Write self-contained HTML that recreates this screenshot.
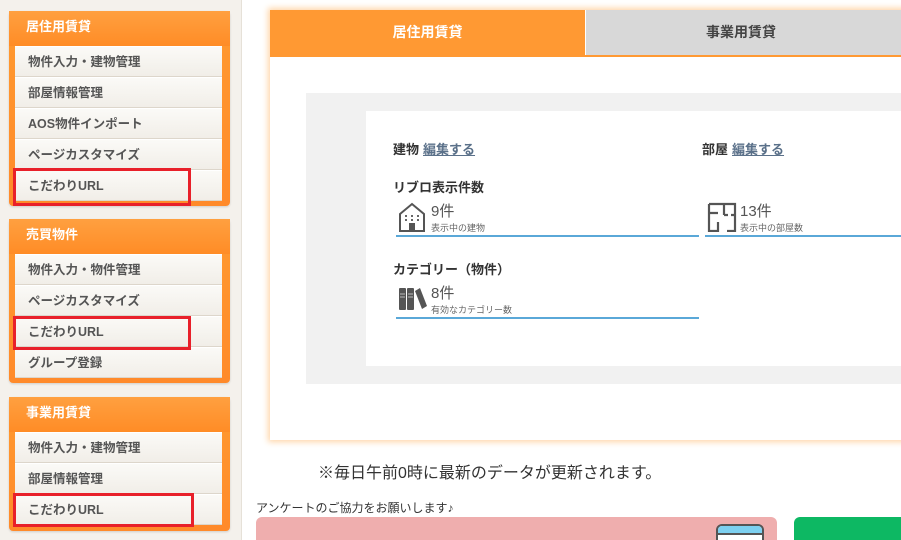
<!DOCTYPE html>
<html><head><meta charset="utf-8"><style>
*{box-sizing:border-box;margin:0;padding:0}
html,body{width:901px;height:540px;overflow:hidden}
body{background:#fff;font-family:"Liberation Sans","Noto Sans CJK JP",sans-serif;position:relative}
.side{position:absolute;left:0;top:0;width:242px;height:540px;background:#f4f1ec;border-right:1px solid #e6e1d8}
.panel{position:absolute;left:9px;width:221px;background:linear-gradient(#ff9a30,#ff8a2a);border-radius:4px;box-shadow:0 1px 2px rgba(0,0,0,.15)}
.panel h3{height:35px;line-height:32px;padding-left:17px;color:#fff;font-size:13px;font-weight:bold;background:linear-gradient(#ffa040,#ff8c26)}
.item{margin:0 8px 0 6px;height:31px;line-height:30px;background:linear-gradient(#fbfaf7,#f1eee8);border-bottom:1px solid #ddd6cb;border-top:1px solid #fff;padding-left:13px;font-size:12.5px;font-weight:bold;color:#555}
.red{position:absolute;border:3px solid #e8202a}
.card{position:absolute;left:270px;top:10px;width:640px;height:430px;background:#fff;box-shadow:0 0 6px 2px #ffd6a8}
.tab1{position:absolute;left:0;top:0;width:315px;height:46px;background:#ff9933;color:#fff;font-weight:bold;font-size:14px;text-align:center;line-height:44px}
.tab2{position:absolute;left:316px;top:0;width:324px;height:45px;background:#d8d8d8;color:#444;font-weight:bold;font-size:14px;line-height:44px;padding-left:120px}
.tline{position:absolute;left:0;top:45px;width:640px;height:2px;background:#ff9933}
.gray{position:absolute;left:36px;top:83px;width:604px;height:291px;background:#f1f1f1}
.inner{position:absolute;left:60px;top:18px;width:544px;height:255px;background:#fff}
.t{position:absolute;font-size:13px;font-weight:bold;color:#333;white-space:nowrap}
.t a{color:#5a7089;text-decoration:underline;margin-left:4px}
.stat{position:absolute;height:30px;border-bottom:2px solid #5aa8d8}
.num{position:absolute;left:35px;top:-7px;font-size:15px;color:#555}
.sub{position:absolute;left:35px;top:14px;font-size:9px;color:#666;white-space:nowrap}
</style></head><body>
<div class="side">
 <div class="panel" style="top:11px;height:195px"><h3>居住用賃貸</h3>
  <div class="item">物件入力・建物管理</div><div class="item">部屋情報管理</div><div class="item">AOS物件インポート</div><div class="item">ページカスタマイズ</div><div class="item">こだわりURL</div></div>
 <div class="panel" style="top:219px;height:164px"><h3>売買物件</h3>
  <div class="item">物件入力・物件管理</div><div class="item">ページカスタマイズ</div><div class="item">こだわりURL</div><div class="item">グループ登録</div></div>
 <div class="panel" style="top:397px;height:134px"><h3>事業用賃貸</h3>
  <div class="item">物件入力・建物管理</div><div class="item">部屋情報管理</div><div class="item">こだわりURL</div></div>
 <div class="red" style="left:13px;top:168px;width:178px;height:38px"></div>
 <div class="red" style="left:13px;top:316px;width:178px;height:34px"></div>
 <div class="red" style="left:13px;top:493px;width:181px;height:34px"></div>
</div>
<div class="card">
 <div class="tab1">居住用賃貸</div><div class="tab2">事業用賃貸</div><div class="tline"></div>
 <div class="gray"><div class="inner">
  <div class="t" style="left:27px;top:28px">建物<a>編集する</a></div>
  <div class="t" style="left:336px;top:28px">部屋<a>編集する</a></div>
  <div class="t" style="left:27px;top:66px">リブロ表示件数</div>
  <div class="stat" style="left:30px;top:96px;width:303px">
   <svg style="position:absolute;left:2px;top:-5px" width="28" height="30" viewBox="0 0 28 30"><path d="M2 12 L14 2 L26 12 V29 H2 Z" fill="none" stroke="#555" stroke-width="2"/><rect x="11" y="21" width="6" height="8" fill="#555"/><g fill="#666"><rect x="7" y="13" width="2" height="2"/><rect x="13" y="13" width="2" height="2"/><rect x="19" y="13" width="2" height="2"/><rect x="7" y="17" width="2" height="2"/><rect x="13" y="17" width="2" height="2"/><rect x="19" y="17" width="2" height="2"/></g></svg>
   <div class="num">9件</div><div class="sub">表示中の建物</div></div>
  <div class="stat" style="left:339px;top:96px;width:210px">
   <svg style="position:absolute;left:2px;top:-5px" width="30" height="30" viewBox="0 0 30 30"><path d="M2 2 H28 V29 H20 M2 2 V29 H11 V20 M2 11 H11 M17 2 V13 M17 13 H21 M28 13 H24" fill="none" stroke="#555" stroke-width="2.2"/></svg>
   <div class="num">13件</div><div class="sub">表示中の部屋数</div></div>
  <div class="t" style="left:27px;top:148px">カテゴリー（物件）</div>
  <div class="stat" style="left:30px;top:178px;width:303px">
   <svg style="position:absolute;left:2px;top:-4px" width="30" height="28" viewBox="0 0 30 28"><rect x="1" y="3" width="7" height="22" rx="1" fill="#555"/><rect x="9" y="3" width="7" height="22" rx="1" fill="#555"/><path d="M17 6 L22 3 L29 21 L24 24 Z" fill="#555"/><g stroke="#bbb" stroke-width="1"><path d="M2 9 H7 M10 9 H15 M2 12 H7 M10 12 H15"/></g></svg>
   <div class="num">8件</div><div class="sub">有効なカテゴリー数</div></div>
 </div></div>
</div>
<div style="position:absolute;left:318px;top:459px;font-size:16px;color:#333">※毎日午前0時に最新のデータが更新されます。</div>
<div style="position:absolute;left:256px;top:499px;font-size:12px;color:#333">アンケートのご協力をお願いします♪</div>
<div style="position:absolute;left:256px;top:517px;width:521px;height:40px;background:#efaeae;border-radius:6px"></div>
<div style="position:absolute;left:716px;top:524px;width:48px;height:30px;background:#fff;border:2px solid #555;border-radius:6px;overflow:hidden"><div style="height:9px;background:#7dd0f0;border-bottom:2px solid #555"></div></div>
<div style="position:absolute;left:794px;top:517px;width:120px;height:40px;background:#0db863;border-radius:6px"></div>
</body></html>
